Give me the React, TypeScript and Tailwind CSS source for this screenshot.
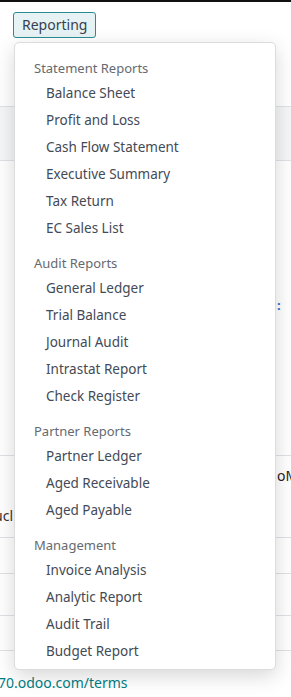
import React from "react";

const sections: { title: string; items: string[] }[] = [
  {
    title: "Statement Reports",
    items: ["Balance Sheet", "Profit and Loss", "Cash Flow Statement", "Executive Summary", "Tax Return", "EC Sales List"],
  },
  {
    title: "Audit Reports",
    items: ["General Ledger", "Trial Balance", "Journal Audit", "Intrastat Report", "Check Register"],
  },
  {
    title: "Partner Reports",
    items: ["Partner Ledger", "Aged Receivable", "Aged Payable"],
  },
  {
    title: "Management",
    items: ["Invoice Analysis", "Analytic Report", "Audit Trail", "Budget Report"],
  },
];

export default function App() {
  return (
    <div
      className="relative w-[291px] h-[697px] overflow-hidden bg-white"
      style={{ fontFamily: '"Noto Sans", "Open Sans", sans-serif' }}
    >
      <div className="h-[2px] bg-[#111111]" />
      <div className="h-[104px] pl-[13px] pt-[10px]">
        <button className="h-[26px] px-[8px] rounded-[3px] border border-[#2a8c91] bg-[#e6f2f3] text-[14px] leading-[24px] text-[#374151]">
          Reporting
        </button>
      </div>
      <div className="h-[55px] border-t border-b border-[#dee2e6] bg-[#f5f6f7]" />
      <div className="h-[294px] flex justify-end items-start pt-[137px]">
        <span className="w-[14px] text-[13px] leading-[14px] font-bold text-[#1f6fd1]">:</span>
      </div>
      <div className="h-[82px] border-t border-[#dee2e6]">
        <div className="pl-[277px] pt-[10px] whitespace-nowrap text-[14px] leading-[20px] text-[#222]">oM</div>
        <div className="w-[13px] flex justify-end whitespace-nowrap text-[14px] leading-[20px] text-[#333] mt-[20px]">
          Nucl
        </div>
      </div>
      <div className="h-[36px] border-t border-[#dee2e6]" />
      <div className="h-[42px] border-t border-[#dee2e6]" />
      <div className="h-[35px] border-t border-[#dee2e6]" />
      <div className="border-t border-[#dee2e6] pt-[22px]">
        <div className="ml-[-2px] whitespace-nowrap text-[14px] leading-[20px] text-[#017e84]">70.odoo.com/terms</div>
      </div>

      <div className="absolute left-[14px] top-[42px] w-[262px] h-[628px] rounded-[5px] border border-[#dcdcdc] bg-white shadow-[0_6px_20px_rgba(0,0,0,0.16)] pt-[14px]">
        {sections.map((s, i) => (
          <div key={s.title} className={i > 0 ? "mt-[10px]" : ""}>
            <div className="h-[23px] pl-[19px] text-[13px] leading-[23px] text-[#666a70]">{s.title}</div>
            {s.items.map((it) => (
              <div key={it} className="h-[27px] pl-[31px] text-[13.5px] leading-[27px] text-[#434a56]">
                {it}
              </div>
            ))}
          </div>
        ))}
      </div>
    </div>
  );
}
